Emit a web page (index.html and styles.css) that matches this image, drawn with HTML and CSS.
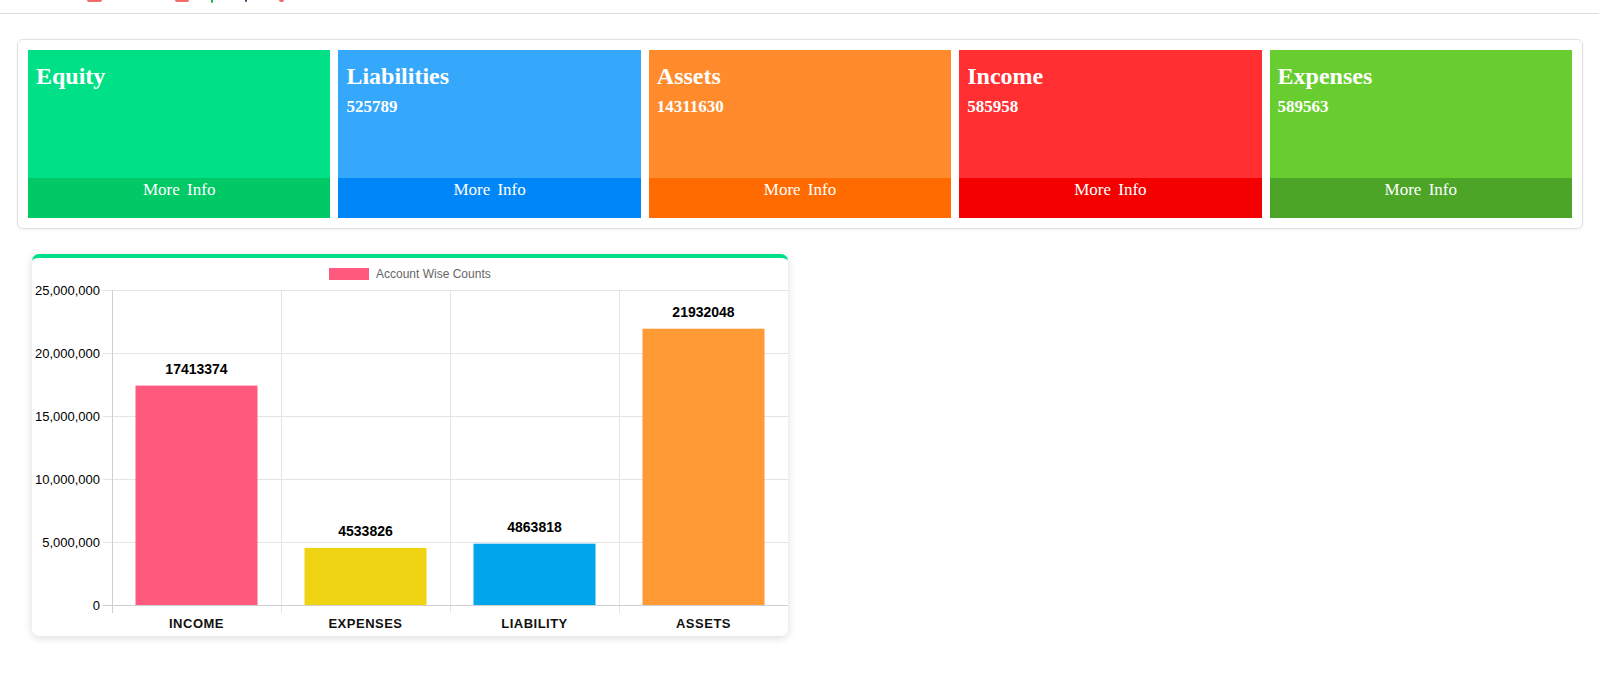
FILE: index.html
```html
<!DOCTYPE html>
<html lang="en">
<head>
<meta charset="utf-8">
<title>Dashboard</title>
<link rel="stylesheet" href="styles.css">
</head>
<body>
<header class="topbar">
  <span class="nav-mark mark-red m1"></span>
  <span class="nav-mark mark-red m2"></span>
  <span class="nav-mark mark-green m3"></span>
  <span class="nav-mark mark-dark m4"></span>
  <span class="nav-mark mark-red m5"></span>
</header>
<main class="main">
  <section class="summary-card">
    <div class="tiles">
      <div class="tile tile-equity">
        <div class="tile-body"><h3 class="tile-title">Equity</h3></div>
        <div class="tile-foot">More Info</div>
      </div>
      <div class="tile tile-liab">
        <div class="tile-body"><h3 class="tile-title">Liabilities</h3><div class="tile-value">525789</div></div>
        <div class="tile-foot">More Info</div>
      </div>
      <div class="tile tile-assets">
        <div class="tile-body"><h3 class="tile-title">Assets</h3><div class="tile-value">14311630</div></div>
        <div class="tile-foot">More Info</div>
      </div>
      <div class="tile tile-income">
        <div class="tile-body"><h3 class="tile-title">Income</h3><div class="tile-value">585958</div></div>
        <div class="tile-foot">More Info</div>
      </div>
      <div class="tile tile-exp">
        <div class="tile-body"><h3 class="tile-title">Expenses</h3><div class="tile-value">589563</div></div>
        <div class="tile-foot">More Info</div>
      </div>
    </div>
  </section>

  <section class="chart-card">
    <svg class="chart" width="756" height="377" viewBox="0 0 756 377">
      <rect x="297" y="10" width="40" height="12" fill="#ff5a7e"/>
      <text class="legend" x="344" y="20">Account Wise Counts</text>

      <g stroke="#e4e4e4" stroke-width="1">
        <line x1="71" y1="32.5" x2="756" y2="32.5"/>
        <line x1="71" y1="95.5" x2="756" y2="95.5"/>
        <line x1="71" y1="158.5" x2="756" y2="158.5"/>
        <line x1="71" y1="221.5" x2="756" y2="221.5"/>
        <line x1="71" y1="284.5" x2="756" y2="284.5"/>
      </g>
      <g stroke="#e4e4e4" stroke-width="1">
        <line x1="249.5" y1="32" x2="249.5" y2="355"/>
        <line x1="418.5" y1="32" x2="418.5" y2="355"/>
        <line x1="587.5" y1="32" x2="587.5" y2="355"/>
      </g>
      <g stroke="#cfcfcf" stroke-width="1">
        <line x1="80.5" y1="32" x2="80.5" y2="355"/>
        <line x1="71" y1="347.5" x2="756" y2="347.5"/>
      </g>

      <g class="ylab">
        <text x="68" y="36.5">25,000,000</text>
        <text x="68" y="99.5">20,000,000</text>
        <text x="68" y="162.5">15,000,000</text>
        <text x="68" y="225.5">10,000,000</text>
        <text x="68" y="288.5">5,000,000</text>
        <text x="68" y="351.5">0</text>
      </g>

      <rect x="103.5" y="127.6" width="122" height="219.4" fill="#ff5a7e"/>
      <rect x="272.5" y="289.9" width="122" height="57.1" fill="#efd413"/>
      <rect x="441.5" y="285.7" width="122" height="61.3" fill="#00a5eb"/>
      <rect x="610.5" y="70.7" width="122" height="276.3" fill="#ff9a35"/>

      <g class="dlab">
        <text x="164.5" y="115.5">17413374</text>
        <text x="333.5" y="277.5">4533826</text>
        <text x="502.5" y="273.5">4863818</text>
        <text x="671.5" y="58.5">21932048</text>
      </g>

      <g class="xlab">
        <text x="164.5" y="370">INCOME</text>
        <text x="333.5" y="370">EXPENSES</text>
        <text x="502.5" y="370">LIABILITY</text>
        <text x="671.5" y="370">ASSETS</text>
      </g>
    </svg>
  </section>
</main>
</body>
</html>
```

FILE: styles.css
```css
* { box-sizing: border-box; }

html, body {
  margin: 0;
  padding: 0;
  background: #ffffff;
}

body {
  font-family: "Liberation Serif", "Times New Roman", serif;
  width: 1599px;
  height: 684px;
  overflow: hidden;
}

.topbar {
  position: relative;
  height: 14px;
  border-bottom: 1px solid #dcdcdc;
  background: #fff;
}

.nav-mark {
  position: absolute;
  top: 0;
  height: 2px;
  border-radius: 0 0 4px 4px;
}
.mark-red { background: #f06b6b; }
.mark-green { background: #1eb85c; }
.mark-dark { background: #4b3a6a; }
.m1 { left: 87px; width: 15px; }
.m2 { left: 175px; width: 14px; }
.m3 { left: 211px; width: 2px; height: 3px; }
.m4 { left: 245px; width: 2px; }
.m5 { left: 279px; width: 5px; }

.main {
  padding: 25px 16px 0 17px;
}

.summary-card {
  border: 1px solid #dee2e7;
  border-radius: 6px;
  padding: 10px;
  box-shadow: 0 1px 3px rgba(0, 0, 0, 0.06);
  background: #fff;
}

.tiles {
  display: grid;
  grid-template-columns: repeat(5, 1fr);
  gap: 8px;
}

.tile {
  display: flex;
  flex-direction: column;
  height: 168px;
  color: #fff;
}

.tile-body {
  height: 128px;
  padding: 12px 8px 0 8px;
}

.tile-title {
  margin: 0;
  font-size: 24px;
  line-height: 29px;
  font-weight: bold;
}

.tile-value {
  margin-top: 6px;
  font-size: 17px;
  line-height: 20px;
  font-weight: bold;
}

.tile-foot {
  height: 40px;
  padding-top: 2px;
  text-align: center;
  font-size: 17px;
  line-height: 20px;
  word-spacing: 3px;
}

.tile-equity .tile-body { background: #00e187; }
.tile-equity .tile-foot { background: #00c965; }
.tile-liab .tile-body { background: #36a8fc; }
.tile-liab .tile-foot { background: #0086f6; }
.tile-assets .tile-body { background: #ff8b2d; }
.tile-assets .tile-foot { background: #ff6b00; }
.tile-income .tile-body { background: #ff2f32; }
.tile-income .tile-foot { background: #f50000; }
.tile-exp .tile-body { background: #68cd2e; }
.tile-exp .tile-foot { background: #4ca526; }

.chart-card {
  margin-top: 25px;
  margin-left: 15px;
  width: 756px;
  height: 382px;
  border-top: 4px solid #00e08a;
  border-radius: 7px;
  background: #fff;
  box-shadow: 0 2px 8px rgba(0, 0, 0, 0.14);
  overflow: hidden;
}

.chart {
  display: block;
  font-family: "Liberation Sans", Arial, sans-serif;
}

.legend {
  font-size: 12px;
  fill: #666;
}

.ylab text {
  font-size: 13px;
  fill: #000;
  text-anchor: end;
}

.dlab text {
  font-size: 14px;
  font-weight: bold;
  fill: #000;
  text-anchor: middle;
}

.xlab text {
  font-size: 13px;
  font-weight: bold;
  fill: #111;
  letter-spacing: 0.5px;
  text-anchor: middle;
}
```
